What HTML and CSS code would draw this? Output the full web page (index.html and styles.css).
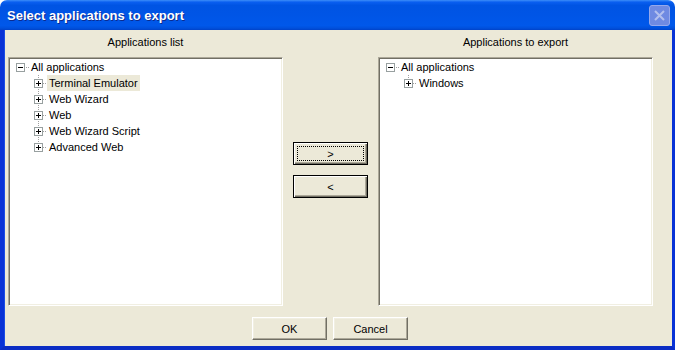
FILE: index.html
```html
<!DOCTYPE html>
<html>
<head>
<meta charset="utf-8">
<link rel="stylesheet" href="styles.css">
</head>
<body>
<div class="window">
  <div class="titlebar">
    <span class="title">Select applications to export</span>
    <span class="close"><svg width="13" height="13" viewBox="0 0 13 13"><path d="M2 2L11 11M11 2L2 11" stroke="#b3c0ee" stroke-width="2"/></svg></span>
  </div>
  <div class="body">
    <div class="panes">
      <div class="label">Applications list</div>
      <div></div>
      <div class="label">Applications to export</div>

      <div class="tree">
        <div class="node root">
          <span class="exp"><svg width="9" height="9"><rect x="0.5" y="0.5" width="8" height="8" fill="#fff" stroke="#98a0a0"/><path d="M2 4.5h5" stroke="#000"/></svg></span>
          <span class="hline"></span>
          <span class="text">All applications</span>
        </div>
        <div class="node child">
          <span class="cell"><span class="exp"><svg width="9" height="9"><rect x="0.5" y="0.5" width="8" height="8" fill="#fff" stroke="#98a0a0"/><path d="M2 4.5h5M4.5 2v5" stroke="#000"/></svg></span></span>
          <span class="hline"></span>
          <span class="text sel">Terminal Emulator</span>
        </div>
        <div class="node child">
          <span class="cell"><span class="exp"><svg width="9" height="9"><rect x="0.5" y="0.5" width="8" height="8" fill="#fff" stroke="#98a0a0"/><path d="M2 4.5h5M4.5 2v5" stroke="#000"/></svg></span></span>
          <span class="hline"></span>
          <span class="text">Web Wizard</span>
        </div>
        <div class="node child">
          <span class="cell"><span class="exp"><svg width="9" height="9"><rect x="0.5" y="0.5" width="8" height="8" fill="#fff" stroke="#98a0a0"/><path d="M2 4.5h5M4.5 2v5" stroke="#000"/></svg></span></span>
          <span class="hline"></span>
          <span class="text">Web</span>
        </div>
        <div class="node child">
          <span class="cell"><span class="exp"><svg width="9" height="9"><rect x="0.5" y="0.5" width="8" height="8" fill="#fff" stroke="#98a0a0"/><path d="M2 4.5h5M4.5 2v5" stroke="#000"/></svg></span></span>
          <span class="hline"></span>
          <span class="text">Web Wizard Script</span>
        </div>
        <div class="node child last">
          <span class="cell"><span class="exp"><svg width="9" height="9"><rect x="0.5" y="0.5" width="8" height="8" fill="#fff" stroke="#98a0a0"/><path d="M2 4.5h5M4.5 2v5" stroke="#000"/></svg></span></span>
          <span class="hline"></span>
          <span class="text">Advanced Web</span>
        </div>
      </div>

      <div class="mid">
        <button class="btn move"><span class="focus">&gt;</span></button>
        <button class="btn move"><span class="nofocus">&lt;</span></button>
      </div>

      <div class="tree">
        <div class="node root">
          <span class="exp"><svg width="9" height="9"><rect x="0.5" y="0.5" width="8" height="8" fill="#fff" stroke="#98a0a0"/><path d="M2 4.5h5" stroke="#000"/></svg></span>
          <span class="hline"></span>
          <span class="text">All applications</span>
        </div>
        <div class="node child last">
          <span class="cell"><span class="exp"><svg width="9" height="9"><rect x="0.5" y="0.5" width="8" height="8" fill="#fff" stroke="#98a0a0"/><path d="M2 4.5h5M4.5 2v5" stroke="#000"/></svg></span></span>
          <span class="hline"></span>
          <span class="text">Windows</span>
        </div>
      </div>
    </div>
    <div class="actions">
      <button class="btn">OK</button>
      <button class="btn">Cancel</button>
    </div>
  </div>
</div>
</body>
</html>
```

FILE: styles.css
```css
html, body {
  margin: 0;
  padding: 0;
  background: #ffffff;
}
.window {
  width: 675px;
  height: 350px;
  box-sizing: border-box;
  display: flex;
  flex-direction: column;
  font-family: "Liberation Sans", Arial, sans-serif;
  font-size: 11px;
  color: #000;
}
.titlebar {
  height: 30px;
  flex: none;
  display: flex;
  align-items: center;
  justify-content: space-between;
  padding: 0 5px 0 7px;
  border-radius: 7px 7px 0 0;
  background: linear-gradient(to bottom, #3d8ef8 0%, #0a5ff0 7%, #0054e3 18%, #0055e6 50%, #0058ea 85%, #0050dc 94%, #0042c8 100%);
}
.title {
  color: #fff;
  font-weight: bold;
  font-size: 13px;
  text-shadow: 1px 1px #0c2b8e;
  padding-top: 1px;
}
.close {
  width: 19px;
  height: 19px;
  border: 1px solid #95a8ec;
  border-radius: 3px;
  background: #6f8ae2;
  display: flex;
  align-items: center;
  justify-content: center;
  margin-top: 1px;
}
.body {
  flex: 1;
  background: #ece9d8;
  border-left: 4px solid #0832d6;
  border-right: 3px solid #0832d6;
  border-bottom: 4px solid #0a2cc4;
  box-shadow: inset 1px 0 #1b4de6;
  display: flex;
  flex-direction: column;
}
.panes {
  display: grid;
  grid-template-columns: 275px 95px 275px;
  grid-template-rows: 16px 249px;
  row-gap: 7px;
  padding: 4px 0 0 4px;
}
.label {
  text-align: center;
  line-height: 16px;
}
.tree {
  box-sizing: border-box;
  background: #fff;
  border: 1px solid;
  border-color: #aca899 #ffffff #ffffff #aca899;
  box-shadow: inset 1px 1px #716f64, inset -1px -1px #f1efe2;
  padding: 1px;
}
.node {
  display: flex;
  align-items: center;
  height: 16px;
}
.root {
  padding-left: 6px;
}
.child {
  padding-left: 24px;
}
.exp {
  width: 9px;
  height: 9px;
  display: block;
}
.exp svg {
  display: block;
}
.cell {
  width: 9px;
  height: 16px;
  display: flex;
  align-items: center;
  background-image: repeating-linear-gradient(to bottom, #a0a0a0 0 1px, transparent 1px 2px);
  background-size: 1px 100%;
  background-position: 4px 0;
  background-repeat: no-repeat;
}
.last .cell {
  background-size: 1px 8px;
}
.hline {
  width: 4px;
  height: 1px;
  margin-left: 1px;
  background-image: repeating-linear-gradient(to right, #a0a0a0 0 1px, transparent 1px 2px);
}
.root .hline {
  width: 3px;
}
.child .hline {
  margin-left: 0;
}
.text {
  padding: 0 2px;
  line-height: 16px;
  white-space: nowrap;
}
.text.sel {
  background: #ece9d8;
}
.mid {
  display: flex;
  flex-direction: column;
  gap: 10px;
  padding: 85px 0 0 10px;
}
.btn {
  box-sizing: border-box;
  width: 75px;
  height: 23px;
  padding: 0;
  margin: 0;
  background: #ece9d8;
  font-family: "Liberation Sans", Arial, sans-serif;
  font-size: 11px;
  color: #000;
  border: 1px solid;
  border-color: #ffffff #716f64 #716f64 #ffffff;
  box-shadow: inset -1px -1px #aca899, inset 1px 1px #f1efe2;
}
.btn.move {
  border: 1px solid #000;
  box-shadow: inset 1px 1px #ffffff, inset -1px -1px #716f64, inset -2px -2px #aca899;
  display: flex;
  padding: 3px;
}
.focus, .nofocus {
  flex: 1;
  display: flex;
  align-items: center;
  justify-content: center;
  border: 1px dotted #000;
}
.nofocus {
  border-color: transparent;
}
.actions {
  display: flex;
  gap: 6px;
  padding: 11px 0 0 248px;
}
```
